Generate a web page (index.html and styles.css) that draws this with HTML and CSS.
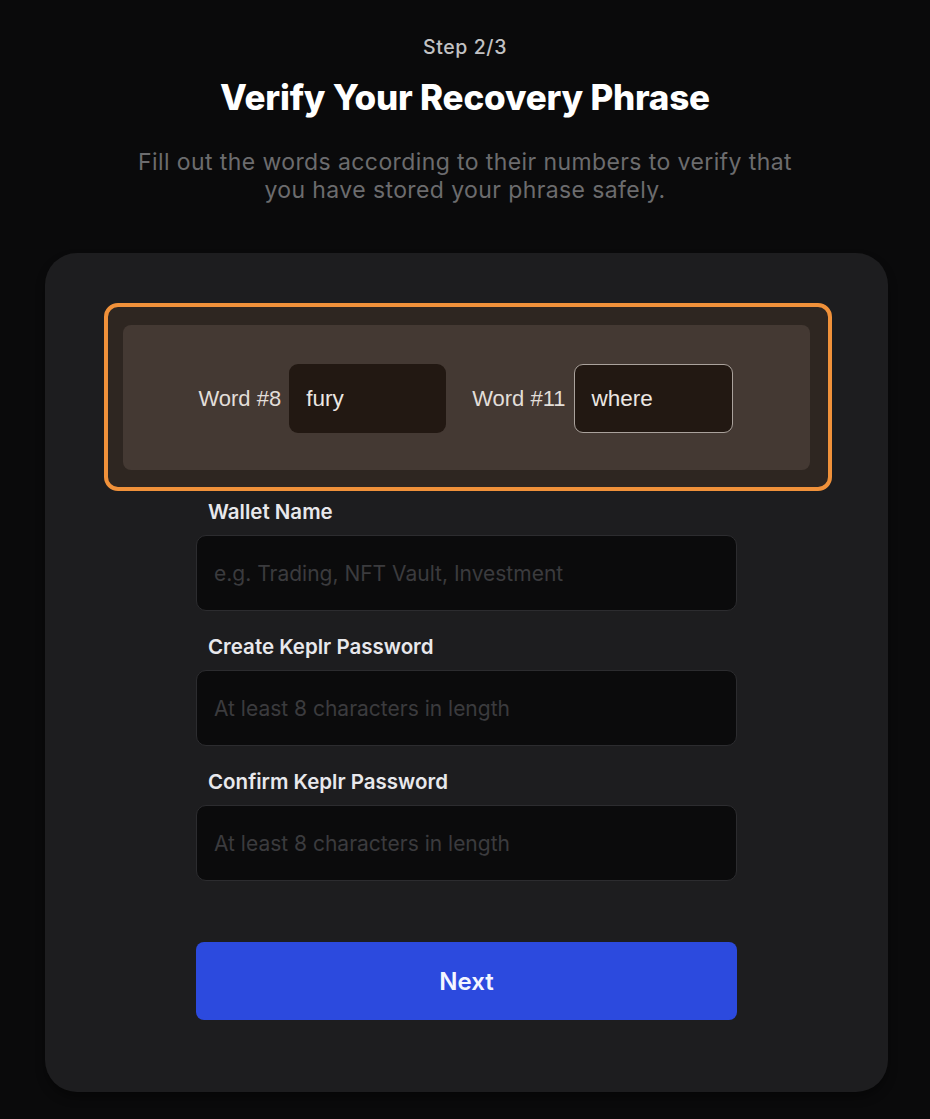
FILE: index.html
```html
<!DOCTYPE html>
<html lang="en">
<head>
<meta charset="utf-8">
<title>Verify Your Recovery Phrase</title>
<link rel="stylesheet" href="styles.css">
</head>
<body>
<main class="page">
  <header class="head">
    <div class="step">Step 2/3</div>
    <h1 class="title">Verify Your Recovery Phrase</h1>
    <p class="subtitle">Fill out the words according to their numbers to verify that you have stored your phrase safely.</p>
  </header>
  <section class="card">
    <div class="highlight">
      <div class="words">
        <label class="word">
          <span class="word-label">Word #8</span>
          <span class="word-input">fury</span>
        </label>
        <label class="word">
          <span class="word-label">Word #11</span>
          <span class="word-input focused">where</span>
        </label>
      </div>
    </div>
    <div class="fields">
      <div class="field">
        <div class="field-label">Wallet Name</div>
        <div class="field-input">e.g. Trading, NFT Vault, Investment</div>
      </div>
      <div class="field">
        <div class="field-label">Create Keplr Password</div>
        <div class="field-input">At least 8 characters in length</div>
      </div>
      <div class="field">
        <div class="field-label">Confirm Keplr Password</div>
        <div class="field-input">At least 8 characters in length</div>
      </div>
      <button class="next" type="button">Next</button>
    </div>
  </section>
</main>
</body>
</html>
```

FILE: styles.css
```css
* { box-sizing: border-box; }
html, body {
  margin: 0;
  padding: 0;
  background: #0a0a0b;
}
body {
  font-family: Inter, "Liberation Sans", sans-serif;
  color: #fff;
  width: 930px;
  height: 1119px;
  overflow: hidden;
}
.page {
  display: flex;
  flex-direction: column;
  align-items: stretch;
}
.head {
  display: flex;
  flex-direction: column;
  align-items: center;
  padding-top: 34px;
}
.step {
  font-size: 19.5px;
  line-height: 26px;
  letter-spacing: 0.6px;
  color: #c2c2c4;
  font-weight: 500;
}
.title {
  margin: 15px 0 0;
  font-size: 35px;
  line-height: 44px;
  font-weight: 800;
  letter-spacing: -0.2px;
  color: #ffffff;
}
.subtitle {
  margin: 29px 0 0;
  width: 700px;
  text-align: center;
  font-size: 23px;
  line-height: 28px;
  letter-spacing: 0.4px;
  color: #6c6c6e;
}
.card {
  margin: 49px 0 0 45px;
  width: 843px;
  height: 839px;
  background: #1d1d1f;
  border-radius: 32px;
  padding-top: 50px;
  display: flex;
  flex-direction: column;
  align-items: center;
  box-shadow: 0 6px 10px rgba(0,0,0,0.35);
}
.highlight {
  width: 728px;
  height: 188px;
  margin-left: 3px;
  border: 4px solid #f0913a;
  border-radius: 14px;
  background: #2e2621;
  padding: 18px 18px 17px 15px;
}
.words {
  height: 100%;
  background: #443933;
  border-radius: 8px;
  display: flex;
  align-items: center;
  justify-content: center;
  gap: 26px;
  font-family: "Liberation Sans", Arial, sans-serif;
  padding: 2px 2px 0 0;
}
.word {
  display: flex;
  align-items: center;
  gap: 8px;
}
.word-label {
  font-size: 22px;
  color: #e2ded9;
}
.word-input {
  width: 157px;
  height: 69px;
  background: #221812;
  border-radius: 9px;
  padding-left: 17px;
  display: flex;
  align-items: center;
  font-size: 22.5px;
  color: #ece7e2;
}
.word-input.focused {
  width: 159px;
  border: 1.5px solid #aaa29c;
  padding-left: 17px;
}
.fields {
  width: 541px;
  margin-top: 9px;
  display: flex;
  flex-direction: column;
}
.field {
  display: flex;
  flex-direction: column;
  margin-bottom: 24px;
}
.field-label {
  padding-left: 12px;
  font-size: 20.5px;
  line-height: 24px;
  font-weight: 600;
  color: #e8e8ec;
  margin-bottom: 11px;
}
.field-input {
  height: 76px;
  background: #0b0b0c;
  border: 1.5px solid #2c2c2f;
  border-radius: 10px;
  padding-left: 17px;
  display: flex;
  align-items: center;
  font-size: 21px;
  color: #3b3b3e;
}
.next {
  margin-top: 37px;
  height: 78px;
  border: 0;
  border-radius: 8px;
  background: #2c4ade;
  color: #f4f6ff;
  font-family: Inter, "Liberation Sans", sans-serif;
  font-size: 24px;
  font-weight: 600;
  cursor: pointer;
}
```
